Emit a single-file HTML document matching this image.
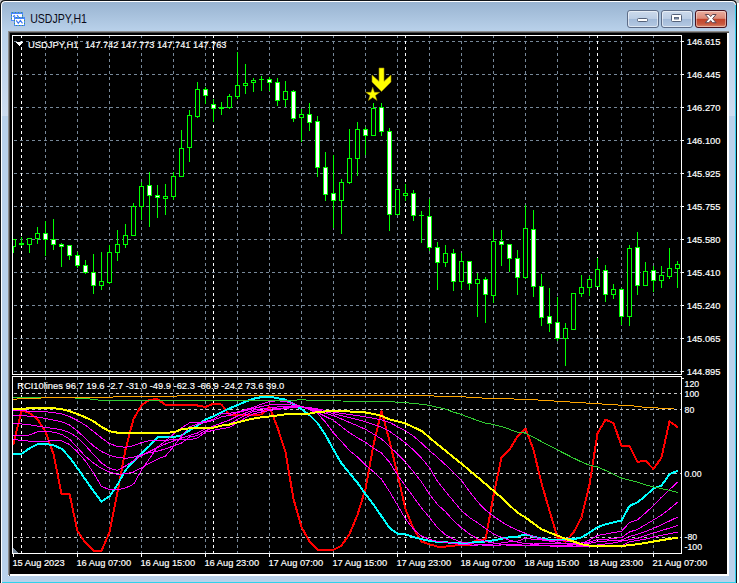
<!DOCTYPE html>
<html><head><meta charset="utf-8"><title>USDJPY,H1</title>
<style>
html,body{margin:0;padding:0;background:#fff;}
body{width:739px;height:583px;overflow:hidden;position:relative;font-family:"Liberation Sans",sans-serif;}
#chart{position:absolute;left:0;top:0;display:block;}
text{font-family:"Liberation Sans",sans-serif;}
</style></head><body>

<svg id="chart" width="739" height="583" viewBox="0 0 739 583">
<defs>
<linearGradient id="gt" gradientUnits="userSpaceOnUse" x1="0" y1="2" x2="0" y2="31"><stop offset="0" stop-color="#99b4d1"/><stop offset="1" stop-color="#b9d1ea"/></linearGradient>
<linearGradient id="gs" gradientUnits="userSpaceOnUse" x1="0" y1="31" x2="0" y2="116"><stop offset="0" stop-color="#b9d1ea"/><stop offset="1" stop-color="#cddcef"/></linearGradient>
</defs>
<rect x="0" y="0" width="5" height="4" fill="#bdbdbd"/><rect x="732" y="0" width="7" height="3" fill="#bdbdbd"/>
<path d="M0 590 V5 Q0 0 5 0 H732 Q737 0 737 5 V590 Z" fill="#101418"/>
<path d="M1 590 V5.5 Q1 1 5.500 1 H731.5 Q736 1 736 5.500 V590 Z" fill="#ffffff"/>
<path d="M2 590 V6 Q2 2 6 2 H731 Q735 2 735 6 V590 Z" fill="#b9d1ea"/>
<path d="M2 31 V6 Q2 2 6 2 H731 Q735 2 735 6 V31 Z" fill="url(#gt)"/>
<g shape-rendering="crispEdges">
<rect x="2" y="31" width="6" height="85" fill="url(#gs)"/>
<rect x="729" y="31" width="6" height="85" fill="url(#gs)"/>
<rect x="735" y="5" width="1" height="578" fill="#35d0ee"/>
<rect x="2" y="582" width="734" height="1" fill="#2fd2ec"/>
</g>
<text x="30.2" y="23.4" font-size="11.9" fill="#0a0a18" textLength="56.8" lengthAdjust="spacingAndGlyphs" style="font-family:'Liberation Sans',sans-serif">USDJPY,H1</text>

<g shape-rendering="crispEdges">
<rect x="11" y="12" width="12" height="9" fill="#4a86fb"/>
<rect x="12" y="14" width="10" height="6" fill="#fdfdff"/>
<rect x="14" y="17" width="11" height="9" fill="#4a86fb"/>
<rect x="15" y="19" width="9" height="6" fill="#ffffff"/>
<g fill="#3f9a6a">
<rect x="12" y="12" width="1" height="1"/><rect x="15" y="12" width="1" height="1"/><rect x="18" y="12" width="1" height="1"/><rect x="21" y="12" width="1" height="1"/>
<rect x="11" y="15" width="1" height="1"/><rect x="11" y="18" width="1" height="1"/><rect x="22" y="15" width="1" height="1"/>
<rect x="16" y="17" width="1" height="1"/><rect x="19" y="17" width="1" height="1"/><rect x="22" y="17" width="1" height="1"/>
<rect x="14" y="20" width="1" height="1"/><rect x="14" y="23" width="1" height="1"/><rect x="24" y="20" width="1" height="1"/><rect x="24" y="23" width="1" height="1"/>
<rect x="16" y="25" width="1" height="1"/><rect x="19" y="25" width="1" height="1"/><rect x="22" y="25" width="1" height="1"/>
</g>
</g>
<path d="M13 16.8 l1.2 -1.3 l0.9 1.2 M17 15.2 l1.6 2" fill="none" stroke="#3a78f2" stroke-width="1.1"/>
<path d="M16.2 20.4 l2.1 3 l2.1 -3 l2.1 3" fill="none" stroke="#3a78f2" stroke-width="1.1"/>

<g>
<defs>
<linearGradient id="gb" x1="0" y1="0" x2="0" y2="1"><stop offset="0" stop-color="#cddbec"/><stop offset="0.47" stop-color="#bccee5"/><stop offset="0.53" stop-color="#a3bbd9"/><stop offset="1" stop-color="#b6cae3"/></linearGradient>
<linearGradient id="gc" x1="0" y1="0" x2="0" y2="1"><stop offset="0" stop-color="#eab0a2"/><stop offset="0.46" stop-color="#dc8a77"/><stop offset="0.52" stop-color="#c2442b"/><stop offset="0.8" stop-color="#c8583f"/><stop offset="1" stop-color="#dc9478"/></linearGradient>
</defs>
<rect x="627.5" y="10.5" width="31" height="17" rx="2.500" fill="url(#gb)" stroke="#5d6d88"/>
<rect x="628.5" y="11.5" width="29" height="15" rx="2" fill="none" stroke="rgba(255,255,255,.55)"/>
<rect x="661.5" y="10.5" width="31" height="17" rx="2.500" fill="url(#gb)" stroke="#5d6d88"/>
<rect x="662.5" y="11.5" width="29" height="15" rx="2" fill="none" stroke="rgba(255,255,255,.55)"/>
<rect x="695.5" y="10.5" width="31" height="17" rx="2.500" fill="url(#gc)" stroke="#45121f"/>
<rect x="696.5" y="11.5" width="29" height="15" rx="2" fill="none" stroke="rgba(255,255,255,.4)"/>
</g>
<g>
<rect x="637.5" y="18.5" width="10" height="3" rx="1" fill="#fff" stroke="#55627a" stroke-width="1"/>
<rect x="671.5" y="14.5" width="10" height="7" rx="1" fill="#fff" stroke="#55627a" stroke-width="1"/>
<rect x="674.5" y="17.5" width="4" height="1.5" fill="#90a6c4" stroke="#55627a" stroke-width="0.9"/>
<path d="M705.3 14.5 l3.6 0 l1.8 2.1 l1.8 -2.1 l3.600 0 l-3.5 4.1 l3.500 4.1 l-3.600 0 l-1.8 -2.1 l-1.8 2.1 l-3.600 0 l3.500 -4.1 z" fill="#fff" stroke="#5e4650" stroke-width="1" stroke-linejoin="round"/>
</g>
<g shape-rendering="crispEdges">
<rect x="8" y="31" width="721" height="545" fill="#8c8c8c"/>
<rect x="9" y="32" width="720" height="544" fill="#4a4a4a"/>
<rect x="10" y="33" width="719" height="543" fill="#ffffff"/>
<rect x="8" y="575" width="1" height="1" fill="#ffffff"/>
<rect x="10" y="33" width="717" height="541" fill="#000"/>
<line x1="14" y1="41.5" x2="681" y2="41.5" stroke="#778899" stroke-width="1" stroke-dasharray="3 3"/>
<line x1="14" y1="74.5" x2="681" y2="74.5" stroke="#778899" stroke-width="1" stroke-dasharray="3 3"/>
<line x1="14" y1="107.5" x2="681" y2="107.5" stroke="#778899" stroke-width="1" stroke-dasharray="3 3"/>
<line x1="14" y1="140.5" x2="681" y2="140.5" stroke="#778899" stroke-width="1" stroke-dasharray="3 3"/>
<line x1="14" y1="173.5" x2="681" y2="173.5" stroke="#778899" stroke-width="1" stroke-dasharray="3 3"/>
<line x1="14" y1="206.5" x2="681" y2="206.5" stroke="#778899" stroke-width="1" stroke-dasharray="3 3"/>
<line x1="14" y1="239.5" x2="681" y2="239.5" stroke="#778899" stroke-width="1" stroke-dasharray="3 3"/>
<line x1="14" y1="272.5" x2="681" y2="272.5" stroke="#778899" stroke-width="1" stroke-dasharray="3 3"/>
<line x1="14" y1="305.5" x2="681" y2="305.5" stroke="#778899" stroke-width="1" stroke-dasharray="3 3"/>
<line x1="14" y1="338.5" x2="681" y2="338.5" stroke="#778899" stroke-width="1" stroke-dasharray="3 3"/>
<line x1="14" y1="371.5" x2="681" y2="371.5" stroke="#778899" stroke-width="1" stroke-dasharray="3 3"/>
<line x1="45.5" y1="35" x2="45.5" y2="374" stroke="#778899" stroke-width="1" stroke-dasharray="3 3"/>
<line x1="45.5" y1="377" x2="45.5" y2="553" stroke="#778899" stroke-width="1" stroke-dasharray="3 3"/>
<line x1="77.5" y1="35" x2="77.5" y2="374" stroke="#778899" stroke-width="1" stroke-dasharray="3 3"/>
<line x1="77.5" y1="377" x2="77.5" y2="553" stroke="#778899" stroke-width="1" stroke-dasharray="3 3"/>
<line x1="109.5" y1="35" x2="109.5" y2="374" stroke="#778899" stroke-width="1" stroke-dasharray="3 3"/>
<line x1="109.5" y1="377" x2="109.5" y2="553" stroke="#778899" stroke-width="1" stroke-dasharray="3 3"/>
<line x1="141.5" y1="35" x2="141.5" y2="374" stroke="#778899" stroke-width="1" stroke-dasharray="3 3"/>
<line x1="141.5" y1="377" x2="141.5" y2="553" stroke="#778899" stroke-width="1" stroke-dasharray="3 3"/>
<line x1="173.5" y1="35" x2="173.5" y2="374" stroke="#778899" stroke-width="1" stroke-dasharray="3 3"/>
<line x1="173.5" y1="377" x2="173.5" y2="553" stroke="#778899" stroke-width="1" stroke-dasharray="3 3"/>
<line x1="205.5" y1="35" x2="205.5" y2="374" stroke="#778899" stroke-width="1" stroke-dasharray="3 3"/>
<line x1="205.5" y1="377" x2="205.5" y2="553" stroke="#778899" stroke-width="1" stroke-dasharray="3 3"/>
<line x1="237.5" y1="35" x2="237.5" y2="374" stroke="#778899" stroke-width="1" stroke-dasharray="3 3"/>
<line x1="237.5" y1="377" x2="237.5" y2="553" stroke="#778899" stroke-width="1" stroke-dasharray="3 3"/>
<line x1="269.5" y1="35" x2="269.5" y2="374" stroke="#778899" stroke-width="1" stroke-dasharray="3 3"/>
<line x1="269.5" y1="377" x2="269.5" y2="553" stroke="#778899" stroke-width="1" stroke-dasharray="3 3"/>
<line x1="301.5" y1="35" x2="301.5" y2="374" stroke="#778899" stroke-width="1" stroke-dasharray="3 3"/>
<line x1="301.5" y1="377" x2="301.5" y2="553" stroke="#778899" stroke-width="1" stroke-dasharray="3 3"/>
<line x1="333.5" y1="35" x2="333.5" y2="374" stroke="#778899" stroke-width="1" stroke-dasharray="3 3"/>
<line x1="333.5" y1="377" x2="333.5" y2="553" stroke="#778899" stroke-width="1" stroke-dasharray="3 3"/>
<line x1="365.5" y1="35" x2="365.5" y2="374" stroke="#778899" stroke-width="1" stroke-dasharray="3 3"/>
<line x1="365.5" y1="377" x2="365.5" y2="553" stroke="#778899" stroke-width="1" stroke-dasharray="3 3"/>
<line x1="397.5" y1="35" x2="397.5" y2="374" stroke="#778899" stroke-width="1" stroke-dasharray="3 3"/>
<line x1="397.5" y1="377" x2="397.5" y2="553" stroke="#778899" stroke-width="1" stroke-dasharray="3 3"/>
<line x1="429.5" y1="35" x2="429.5" y2="374" stroke="#778899" stroke-width="1" stroke-dasharray="3 3"/>
<line x1="429.5" y1="377" x2="429.5" y2="553" stroke="#778899" stroke-width="1" stroke-dasharray="3 3"/>
<line x1="461.5" y1="35" x2="461.5" y2="374" stroke="#778899" stroke-width="1" stroke-dasharray="3 3"/>
<line x1="461.5" y1="377" x2="461.5" y2="553" stroke="#778899" stroke-width="1" stroke-dasharray="3 3"/>
<line x1="493.5" y1="35" x2="493.5" y2="374" stroke="#778899" stroke-width="1" stroke-dasharray="3 3"/>
<line x1="493.5" y1="377" x2="493.5" y2="553" stroke="#778899" stroke-width="1" stroke-dasharray="3 3"/>
<line x1="525.5" y1="35" x2="525.5" y2="374" stroke="#778899" stroke-width="1" stroke-dasharray="3 3"/>
<line x1="525.5" y1="377" x2="525.5" y2="553" stroke="#778899" stroke-width="1" stroke-dasharray="3 3"/>
<line x1="557.5" y1="35" x2="557.5" y2="374" stroke="#778899" stroke-width="1" stroke-dasharray="3 3"/>
<line x1="557.5" y1="377" x2="557.5" y2="553" stroke="#778899" stroke-width="1" stroke-dasharray="3 3"/>
<line x1="589.5" y1="35" x2="589.5" y2="374" stroke="#778899" stroke-width="1" stroke-dasharray="3 3"/>
<line x1="589.5" y1="377" x2="589.5" y2="553" stroke="#778899" stroke-width="1" stroke-dasharray="3 3"/>
<line x1="621.5" y1="35" x2="621.5" y2="374" stroke="#778899" stroke-width="1" stroke-dasharray="3 3"/>
<line x1="621.5" y1="377" x2="621.5" y2="553" stroke="#778899" stroke-width="1" stroke-dasharray="3 3"/>
<line x1="653.5" y1="35" x2="653.5" y2="374" stroke="#778899" stroke-width="1" stroke-dasharray="3 3"/>
<line x1="653.5" y1="377" x2="653.5" y2="553" stroke="#778899" stroke-width="1" stroke-dasharray="3 3"/>
<line x1="21.5" y1="35" x2="21.5" y2="374" stroke="#ffffff" stroke-width="1" stroke-dasharray="3 3"/>
<line x1="21.5" y1="377" x2="21.5" y2="553" stroke="#ffffff" stroke-width="1" stroke-dasharray="3 3"/>
<line x1="213.5" y1="35" x2="213.5" y2="374" stroke="#ffffff" stroke-width="1" stroke-dasharray="3 3"/>
<line x1="213.5" y1="377" x2="213.5" y2="553" stroke="#ffffff" stroke-width="1" stroke-dasharray="3 3"/>
<line x1="405.5" y1="35" x2="405.5" y2="374" stroke="#ffffff" stroke-width="1" stroke-dasharray="3 3"/>
<line x1="405.5" y1="377" x2="405.5" y2="553" stroke="#ffffff" stroke-width="1" stroke-dasharray="3 3"/>
<line x1="597.5" y1="35" x2="597.5" y2="374" stroke="#ffffff" stroke-width="1" stroke-dasharray="3 3"/>
<line x1="597.5" y1="377" x2="597.5" y2="553" stroke="#ffffff" stroke-width="1" stroke-dasharray="3 3"/>
<line x1="14" y1="393.5" x2="681" y2="393.5" stroke="#c8c8c8" stroke-width="1" stroke-dasharray="3 3"/>
<line x1="14" y1="409.5" x2="681" y2="409.5" stroke="#c8c8c8" stroke-width="1" stroke-dasharray="3 3"/>
<line x1="14" y1="473.5" x2="681" y2="473.5" stroke="#c8c8c8" stroke-width="1" stroke-dasharray="3 3"/>
<line x1="14" y1="537.5" x2="681" y2="537.5" stroke="#c8c8c8" stroke-width="1" stroke-dasharray="3 3"/>
<rect x="12.5" y="35.5" width="669" height="339" fill="none" stroke="#fff"/>
<rect x="12.5" y="376.5" width="669" height="177" fill="none" stroke="#fff"/>
<rect x="682" y="41" width="2" height="1" fill="#fff"/>
<rect x="682" y="74" width="2" height="1" fill="#fff"/>
<rect x="682" y="107" width="2" height="1" fill="#fff"/>
<rect x="682" y="140" width="2" height="1" fill="#fff"/>
<rect x="682" y="173" width="2" height="1" fill="#fff"/>
<rect x="682" y="206" width="2" height="1" fill="#fff"/>
<rect x="682" y="239" width="2" height="1" fill="#fff"/>
<rect x="682" y="272" width="2" height="1" fill="#fff"/>
<rect x="682" y="305" width="2" height="1" fill="#fff"/>
<rect x="682" y="338" width="2" height="1" fill="#fff"/>
<rect x="682" y="371" width="2" height="1" fill="#fff"/>
<rect x="682" y="378" width="2" height="1" fill="#fff"/>
<rect x="13" y="554" width="1" height="3" fill="#fff"/>
<rect x="77" y="554" width="1" height="3" fill="#fff"/>
<rect x="141" y="554" width="1" height="3" fill="#fff"/>
<rect x="205" y="554" width="1" height="3" fill="#fff"/>
<rect x="269" y="554" width="1" height="3" fill="#fff"/>
<rect x="333" y="554" width="1" height="3" fill="#fff"/>
<rect x="397" y="554" width="1" height="3" fill="#fff"/>
<rect x="461" y="554" width="1" height="3" fill="#fff"/>
<rect x="525" y="554" width="1" height="3" fill="#fff"/>
<rect x="589" y="554" width="1" height="3" fill="#fff"/>
<rect x="653" y="554" width="1" height="3" fill="#fff"/>
<polygon points="13,548 13,553 18,553" fill="#778899"/>
<polygon points="16,42 23,42 19.5,46" fill="#fff"/>
<rect x="13" y="239" width="1" height="14" fill="#00ff00"/>
<rect x="11" y="239" width="5" height="8" fill="#00ff00"/>
<rect x="12" y="240" width="3" height="6" fill="#000"/>
<rect x="21" y="237" width="1" height="9" fill="#00ff00"/>
<rect x="19" y="243" width="5" height="2" fill="#00ff00"/>
<rect x="29" y="238" width="1" height="15" fill="#00ff00"/>
<rect x="27" y="238" width="5" height="7" fill="#00ff00"/>
<rect x="28" y="239" width="3" height="5" fill="#000"/>
<rect x="37" y="227" width="1" height="17" fill="#00ff00"/>
<rect x="35" y="233" width="5" height="6" fill="#00ff00"/>
<rect x="36" y="234" width="3" height="4" fill="#000"/>
<rect x="45" y="221" width="1" height="35" fill="#00ff00"/>
<rect x="43" y="233" width="5" height="7" fill="#00ff00"/>
<rect x="44" y="234" width="3" height="5" fill="#fff"/>
<rect x="53" y="219" width="1" height="31" fill="#00ff00"/>
<rect x="51" y="239" width="5" height="6" fill="#00ff00"/>
<rect x="52" y="240" width="3" height="4" fill="#fff"/>
<rect x="61" y="243" width="1" height="24" fill="#00ff00"/>
<rect x="59" y="244" width="5" height="3" fill="#00ff00"/>
<rect x="60" y="245" width="3" height="1" fill="#fff"/>
<rect x="69" y="245" width="1" height="15" fill="#00ff00"/>
<rect x="67" y="245" width="5" height="11" fill="#00ff00"/>
<rect x="68" y="246" width="3" height="9" fill="#fff"/>
<rect x="77" y="252" width="1" height="16" fill="#00ff00"/>
<rect x="75" y="255" width="5" height="11" fill="#00ff00"/>
<rect x="76" y="256" width="3" height="9" fill="#fff"/>
<rect x="85" y="260" width="1" height="14" fill="#00ff00"/>
<rect x="83" y="265" width="5" height="8" fill="#00ff00"/>
<rect x="84" y="266" width="3" height="6" fill="#fff"/>
<rect x="93" y="254" width="1" height="40" fill="#00ff00"/>
<rect x="91" y="272" width="5" height="14" fill="#00ff00"/>
<rect x="92" y="273" width="3" height="12" fill="#fff"/>
<rect x="101" y="252" width="1" height="38" fill="#00ff00"/>
<rect x="99" y="281" width="5" height="5" fill="#00ff00"/>
<rect x="100" y="282" width="3" height="3" fill="#000"/>
<rect x="109" y="245" width="1" height="39" fill="#00ff00"/>
<rect x="107" y="252" width="5" height="31" fill="#00ff00"/>
<rect x="108" y="253" width="3" height="29" fill="#000"/>
<rect x="117" y="230" width="1" height="31" fill="#00ff00"/>
<rect x="115" y="244" width="5" height="9" fill="#00ff00"/>
<rect x="116" y="245" width="3" height="7" fill="#000"/>
<rect x="125" y="224" width="1" height="24" fill="#00ff00"/>
<rect x="123" y="235" width="5" height="10" fill="#00ff00"/>
<rect x="124" y="236" width="3" height="8" fill="#000"/>
<rect x="133" y="203" width="1" height="33" fill="#00ff00"/>
<rect x="131" y="206" width="5" height="30" fill="#00ff00"/>
<rect x="132" y="207" width="3" height="28" fill="#000"/>
<rect x="141" y="182" width="1" height="38" fill="#00ff00"/>
<rect x="139" y="186" width="5" height="21" fill="#00ff00"/>
<rect x="140" y="187" width="3" height="19" fill="#000"/>
<rect x="149" y="172" width="1" height="55" fill="#00ff00"/>
<rect x="147" y="185" width="5" height="11" fill="#00ff00"/>
<rect x="148" y="186" width="3" height="9" fill="#fff"/>
<rect x="157" y="185" width="1" height="33" fill="#00ff00"/>
<rect x="155" y="195" width="5" height="3" fill="#00ff00"/>
<rect x="156" y="196" width="3" height="1" fill="#fff"/>
<rect x="165" y="184" width="1" height="31" fill="#00ff00"/>
<rect x="163" y="196" width="5" height="3" fill="#00ff00"/>
<rect x="164" y="197" width="3" height="1" fill="#000"/>
<rect x="173" y="172" width="1" height="28" fill="#00ff00"/>
<rect x="171" y="176" width="5" height="21" fill="#00ff00"/>
<rect x="172" y="177" width="3" height="19" fill="#000"/>
<rect x="181" y="130" width="1" height="47" fill="#00ff00"/>
<rect x="179" y="148" width="5" height="29" fill="#00ff00"/>
<rect x="180" y="149" width="3" height="27" fill="#000"/>
<rect x="189" y="110" width="1" height="52" fill="#00ff00"/>
<rect x="187" y="115" width="5" height="33" fill="#00ff00"/>
<rect x="188" y="116" width="3" height="31" fill="#000"/>
<rect x="197" y="82" width="1" height="36" fill="#00ff00"/>
<rect x="195" y="89" width="5" height="28" fill="#00ff00"/>
<rect x="196" y="90" width="3" height="26" fill="#000"/>
<rect x="205" y="87" width="1" height="17" fill="#00ff00"/>
<rect x="203" y="89" width="5" height="7" fill="#00ff00"/>
<rect x="204" y="90" width="3" height="5" fill="#fff"/>
<rect x="213" y="99" width="1" height="23" fill="#00ff00"/>
<rect x="211" y="104" width="5" height="5" fill="#00ff00"/>
<rect x="212" y="105" width="3" height="3" fill="#fff"/>
<rect x="221" y="102" width="1" height="13" fill="#00ff00"/>
<rect x="219" y="107" width="5" height="2" fill="#00ff00"/>
<rect x="229" y="94" width="1" height="15" fill="#00ff00"/>
<rect x="227" y="96" width="5" height="12" fill="#00ff00"/>
<rect x="228" y="97" width="3" height="10" fill="#000"/>
<rect x="237" y="52" width="1" height="47" fill="#00ff00"/>
<rect x="235" y="85" width="5" height="12" fill="#00ff00"/>
<rect x="236" y="86" width="3" height="10" fill="#000"/>
<rect x="245" y="64" width="1" height="30" fill="#00ff00"/>
<rect x="243" y="83" width="5" height="3" fill="#00ff00"/>
<rect x="244" y="84" width="3" height="1" fill="#000"/>
<rect x="253" y="78" width="1" height="14" fill="#00ff00"/>
<rect x="251" y="80" width="5" height="3" fill="#00ff00"/>
<rect x="252" y="81" width="3" height="1" fill="#000"/>
<rect x="261" y="76" width="1" height="15" fill="#00ff00"/>
<rect x="259" y="79" width="5" height="1" fill="#00ff00"/>
<rect x="269" y="77" width="1" height="14" fill="#00ff00"/>
<rect x="267" y="79" width="5" height="4" fill="#00ff00"/>
<rect x="268" y="80" width="3" height="2" fill="#fff"/>
<rect x="277" y="78" width="1" height="28" fill="#00ff00"/>
<rect x="275" y="82" width="5" height="19" fill="#00ff00"/>
<rect x="276" y="83" width="3" height="17" fill="#fff"/>
<rect x="285" y="81" width="1" height="26" fill="#00ff00"/>
<rect x="283" y="91" width="5" height="9" fill="#00ff00"/>
<rect x="284" y="92" width="3" height="7" fill="#000"/>
<rect x="293" y="90" width="1" height="32" fill="#00ff00"/>
<rect x="291" y="91" width="5" height="28" fill="#00ff00"/>
<rect x="292" y="92" width="3" height="26" fill="#fff"/>
<rect x="301" y="109" width="1" height="33" fill="#00ff00"/>
<rect x="299" y="114" width="5" height="4" fill="#00ff00"/>
<rect x="300" y="115" width="3" height="2" fill="#000"/>
<rect x="309" y="103" width="1" height="28" fill="#00ff00"/>
<rect x="307" y="114" width="5" height="9" fill="#00ff00"/>
<rect x="308" y="115" width="3" height="7" fill="#fff"/>
<rect x="317" y="116" width="1" height="61" fill="#00ff00"/>
<rect x="315" y="121" width="5" height="47" fill="#00ff00"/>
<rect x="316" y="122" width="3" height="45" fill="#fff"/>
<rect x="325" y="152" width="1" height="49" fill="#00ff00"/>
<rect x="323" y="167" width="5" height="28" fill="#00ff00"/>
<rect x="324" y="168" width="3" height="26" fill="#fff"/>
<rect x="333" y="155" width="1" height="73" fill="#00ff00"/>
<rect x="331" y="193" width="5" height="8" fill="#00ff00"/>
<rect x="332" y="194" width="3" height="6" fill="#fff"/>
<rect x="341" y="179" width="1" height="55" fill="#00ff00"/>
<rect x="339" y="182" width="5" height="19" fill="#00ff00"/>
<rect x="340" y="183" width="3" height="17" fill="#000"/>
<rect x="349" y="129" width="1" height="55" fill="#00ff00"/>
<rect x="347" y="158" width="5" height="25" fill="#00ff00"/>
<rect x="348" y="159" width="3" height="23" fill="#000"/>
<rect x="357" y="122" width="1" height="54" fill="#00ff00"/>
<rect x="355" y="129" width="5" height="30" fill="#00ff00"/>
<rect x="356" y="130" width="3" height="28" fill="#000"/>
<rect x="365" y="127" width="1" height="28" fill="#00ff00"/>
<rect x="363" y="129" width="5" height="7" fill="#00ff00"/>
<rect x="364" y="130" width="3" height="5" fill="#fff"/>
<rect x="373" y="103" width="1" height="33" fill="#00ff00"/>
<rect x="371" y="108" width="5" height="28" fill="#00ff00"/>
<rect x="372" y="109" width="3" height="26" fill="#000"/>
<rect x="381" y="103" width="1" height="33" fill="#00ff00"/>
<rect x="379" y="107" width="5" height="25" fill="#00ff00"/>
<rect x="380" y="108" width="3" height="23" fill="#fff"/>
<rect x="389" y="128" width="1" height="103" fill="#00ff00"/>
<rect x="387" y="131" width="5" height="84" fill="#00ff00"/>
<rect x="388" y="132" width="3" height="82" fill="#fff"/>
<rect x="397" y="189" width="1" height="26" fill="#00ff00"/>
<rect x="395" y="189" width="5" height="26" fill="#00ff00"/>
<rect x="396" y="190" width="3" height="24" fill="#000"/>
<rect x="405" y="184" width="1" height="17" fill="#00ff00"/>
<rect x="403" y="193" width="5" height="3" fill="#00ff00"/>
<rect x="404" y="194" width="3" height="1" fill="#000"/>
<rect x="413" y="190" width="1" height="31" fill="#00ff00"/>
<rect x="411" y="193" width="5" height="23" fill="#00ff00"/>
<rect x="412" y="194" width="3" height="21" fill="#fff"/>
<rect x="421" y="211" width="1" height="32" fill="#00ff00"/>
<rect x="419" y="215" width="5" height="1" fill="#00ff00"/>
<rect x="429" y="199" width="1" height="52" fill="#00ff00"/>
<rect x="427" y="216" width="5" height="32" fill="#00ff00"/>
<rect x="428" y="217" width="3" height="30" fill="#fff"/>
<rect x="437" y="242" width="1" height="48" fill="#00ff00"/>
<rect x="435" y="247" width="5" height="16" fill="#00ff00"/>
<rect x="436" y="248" width="3" height="14" fill="#fff"/>
<rect x="445" y="245" width="1" height="22" fill="#00ff00"/>
<rect x="443" y="253" width="5" height="10" fill="#00ff00"/>
<rect x="444" y="254" width="3" height="8" fill="#000"/>
<rect x="453" y="249" width="1" height="42" fill="#00ff00"/>
<rect x="451" y="253" width="5" height="29" fill="#00ff00"/>
<rect x="452" y="254" width="3" height="27" fill="#fff"/>
<rect x="461" y="253" width="1" height="36" fill="#00ff00"/>
<rect x="459" y="261" width="5" height="21" fill="#00ff00"/>
<rect x="460" y="262" width="3" height="19" fill="#000"/>
<rect x="469" y="261" width="1" height="29" fill="#00ff00"/>
<rect x="467" y="261" width="5" height="23" fill="#00ff00"/>
<rect x="468" y="262" width="3" height="21" fill="#fff"/>
<rect x="477" y="273" width="1" height="44" fill="#00ff00"/>
<rect x="475" y="279" width="5" height="5" fill="#00ff00"/>
<rect x="476" y="280" width="3" height="3" fill="#000"/>
<rect x="485" y="277" width="1" height="46" fill="#00ff00"/>
<rect x="483" y="279" width="5" height="16" fill="#00ff00"/>
<rect x="484" y="280" width="3" height="14" fill="#fff"/>
<rect x="493" y="230" width="1" height="73" fill="#00ff00"/>
<rect x="491" y="241" width="5" height="55" fill="#00ff00"/>
<rect x="492" y="242" width="3" height="53" fill="#000"/>
<rect x="501" y="230" width="1" height="36" fill="#00ff00"/>
<rect x="499" y="241" width="5" height="4" fill="#00ff00"/>
<rect x="500" y="242" width="3" height="2" fill="#fff"/>
<rect x="509" y="244" width="1" height="28" fill="#00ff00"/>
<rect x="507" y="244" width="5" height="15" fill="#00ff00"/>
<rect x="508" y="245" width="3" height="13" fill="#fff"/>
<rect x="517" y="250" width="1" height="45" fill="#00ff00"/>
<rect x="515" y="258" width="5" height="20" fill="#00ff00"/>
<rect x="516" y="259" width="3" height="18" fill="#fff"/>
<rect x="525" y="205" width="1" height="74" fill="#00ff00"/>
<rect x="523" y="228" width="5" height="50" fill="#00ff00"/>
<rect x="524" y="229" width="3" height="48" fill="#000"/>
<rect x="533" y="210" width="1" height="87" fill="#00ff00"/>
<rect x="531" y="229" width="5" height="58" fill="#00ff00"/>
<rect x="532" y="230" width="3" height="56" fill="#fff"/>
<rect x="541" y="274" width="1" height="52" fill="#00ff00"/>
<rect x="539" y="286" width="5" height="32" fill="#00ff00"/>
<rect x="540" y="287" width="3" height="30" fill="#fff"/>
<rect x="549" y="288" width="1" height="44" fill="#00ff00"/>
<rect x="547" y="316" width="5" height="8" fill="#00ff00"/>
<rect x="548" y="317" width="3" height="6" fill="#fff"/>
<rect x="557" y="297" width="1" height="44" fill="#00ff00"/>
<rect x="555" y="322" width="5" height="17" fill="#00ff00"/>
<rect x="556" y="323" width="3" height="15" fill="#fff"/>
<rect x="565" y="323" width="1" height="43" fill="#00ff00"/>
<rect x="563" y="328" width="5" height="11" fill="#00ff00"/>
<rect x="564" y="329" width="3" height="9" fill="#000"/>
<rect x="573" y="293" width="1" height="37" fill="#00ff00"/>
<rect x="571" y="293" width="5" height="37" fill="#00ff00"/>
<rect x="572" y="294" width="3" height="35" fill="#000"/>
<rect x="581" y="275" width="1" height="22" fill="#00ff00"/>
<rect x="579" y="287" width="5" height="7" fill="#00ff00"/>
<rect x="580" y="288" width="3" height="5" fill="#000"/>
<rect x="589" y="276" width="1" height="20" fill="#00ff00"/>
<rect x="587" y="279" width="5" height="9" fill="#00ff00"/>
<rect x="588" y="280" width="3" height="7" fill="#000"/>
<rect x="597" y="258" width="1" height="29" fill="#00ff00"/>
<rect x="595" y="269" width="5" height="18" fill="#00ff00"/>
<rect x="596" y="270" width="3" height="16" fill="#000"/>
<rect x="605" y="265" width="1" height="37" fill="#00ff00"/>
<rect x="603" y="270" width="5" height="25" fill="#00ff00"/>
<rect x="604" y="271" width="3" height="23" fill="#fff"/>
<rect x="613" y="284" width="1" height="15" fill="#00ff00"/>
<rect x="611" y="289" width="5" height="6" fill="#00ff00"/>
<rect x="612" y="290" width="3" height="4" fill="#000"/>
<rect x="621" y="288" width="1" height="37" fill="#00ff00"/>
<rect x="619" y="289" width="5" height="28" fill="#00ff00"/>
<rect x="620" y="290" width="3" height="26" fill="#fff"/>
<rect x="629" y="245" width="1" height="81" fill="#00ff00"/>
<rect x="627" y="248" width="5" height="69" fill="#00ff00"/>
<rect x="628" y="249" width="3" height="67" fill="#000"/>
<rect x="637" y="232" width="1" height="63" fill="#00ff00"/>
<rect x="635" y="247" width="5" height="39" fill="#00ff00"/>
<rect x="636" y="248" width="3" height="37" fill="#fff"/>
<rect x="645" y="262" width="1" height="24" fill="#00ff00"/>
<rect x="643" y="271" width="5" height="15" fill="#00ff00"/>
<rect x="644" y="272" width="3" height="13" fill="#000"/>
<rect x="653" y="266" width="1" height="26" fill="#00ff00"/>
<rect x="651" y="270" width="5" height="11" fill="#00ff00"/>
<rect x="652" y="271" width="3" height="9" fill="#fff"/>
<rect x="661" y="266" width="1" height="22" fill="#00ff00"/>
<rect x="659" y="275" width="5" height="6" fill="#00ff00"/>
<rect x="660" y="276" width="3" height="4" fill="#000"/>
<rect x="669" y="248" width="1" height="31" fill="#00ff00"/>
<rect x="667" y="268" width="5" height="9" fill="#00ff00"/>
<rect x="668" y="269" width="3" height="7" fill="#000"/>
<rect x="677" y="261" width="1" height="27" fill="#00ff00"/>
<rect x="675" y="264" width="5" height="5" fill="#00ff00"/>
<rect x="676" y="265" width="3" height="3" fill="#000"/>
<rect x="10" y="36" width="2" height="338" fill="#000"/>
<rect x="12" y="35" width="1" height="340" fill="#fff"/>
</g>
<g shape-rendering="crispEdges" clip-path="url(#ci)"><defs><clipPath id="ci"><rect x="13" y="377" width="668" height="176"/></clipPath></defs>
<polyline points="13.5,443.9 21.5,410.3 29.5,413.0 37.5,419.2 45.5,431.6 53.5,454.2 61.5,493.8 69.5,493.8 77.5,531.3 85.5,542.7 93.5,550.9 101.5,550.9 109.5,532.1 117.5,492.0 125.5,449.5 133.5,419.0 141.5,405.3 149.5,399.8 157.5,399.1 165.5,404.9 173.5,404.9 181.5,404.9 189.5,404.9 197.5,405.5 205.5,407.0 213.5,403.6 221.5,404.6 229.5,414.7 237.5,414.9 245.5,414.9 253.5,414.6 261.5,414.5 269.5,406.8 277.5,427.5 285.5,452.2 293.5,499.0 301.5,527.1 309.5,541.5 317.5,549.8 325.5,549.8 333.5,549.8 341.5,545.6 349.5,534.0 357.5,514.8 365.5,488.7 373.5,444.7 381.5,410.8 389.5,441.0 397.5,474.0 405.5,509.3 413.5,528.5 421.5,541.5 429.5,544.3 437.5,546.6 445.5,546.6 453.5,545.6 461.5,545.0 469.5,544.7 477.5,539.8 485.5,539.4 493.5,495.6 501.5,457.4 509.5,449.9 517.5,436.2 525.5,428.6 533.5,449.9 541.5,483.2 549.5,510.7 557.5,537.4 565.5,541.5 573.5,532.6 581.5,517.5 589.5,484.6 597.5,433.4 605.5,419.7 613.5,423.1 621.5,445.8 629.5,445.8 637.5,461.9 645.5,460.8 653.5,469.1 661.5,457.4 669.5,421.3 677.5,427.2" fill="none" stroke="#ff0000" stroke-width="2" stroke-linejoin="round" stroke-linecap="round"/>
<polyline points="13.5,453.9 21.5,453.9 29.5,448.3 37.5,444.3 45.5,443.8 53.5,445.3 61.5,448.7 69.5,457.2 77.5,468.3 85.5,479.7 93.5,491.0 101.5,501.5 109.5,496.3 117.5,484.7 125.5,470.2 133.5,461.1 141.5,453.6 149.5,446.0 157.5,437.1 165.5,437.0 173.5,437.0 181.5,435.4 189.5,430.4 197.5,425.6 205.5,419.4 213.5,416.3 221.5,412.3 229.5,408.4 237.5,405.1 245.5,401.7 253.5,398.7 261.5,397.1 269.5,396.5 277.5,398.2 285.5,399.7 293.5,404.2 301.5,409.2 309.5,415.0 317.5,422.9 325.5,435.0 333.5,449.7 341.5,463.4 349.5,473.1 357.5,482.8 365.5,494.2 373.5,504.5 381.5,516.2 389.5,527.8 397.5,533.7 405.5,534.3 413.5,537.0 421.5,539.2 429.5,540.8 437.5,541.9 445.5,542.4 453.5,542.7 461.5,542.7 469.5,542.6 477.5,542.3 485.5,541.4 493.5,540.3 501.5,538.9 509.5,537.1 517.5,536.7 525.5,534.2 533.5,536.6 541.5,538.8 549.5,539.7 557.5,539.5 565.5,539.5 573.5,539.2 581.5,537.4 589.5,532.6 597.5,527.2 605.5,524.3 613.5,522.3 621.5,520.5 629.5,505.9 637.5,502.3 645.5,495.9 653.5,488.3 661.5,485.6 669.5,474.3 677.5,470.8" fill="none" stroke="#00ffff" stroke-width="2" stroke-linejoin="round" stroke-linecap="round"/>
<polyline points="13.5,439.8 21.5,440.2 29.5,441.2 37.5,441.4 45.5,441.2 53.5,440.7 61.5,440.8 69.5,444.5 77.5,452.0 85.5,461.0 93.5,473.0 101.5,486.5 109.5,489.5 117.5,489.8 125.5,487.8 133.5,484.5 141.5,470.0 149.5,458.6 157.5,447.0 165.5,441.0 173.5,434.0 181.5,428.0 189.5,422.9 197.5,422.6 205.5,421.6 213.5,419.2 221.5,413.9 229.5,413.3 237.5,412.0 245.5,409.6 253.5,407.2 261.5,404.2 269.5,401.5 277.5,400.8 285.5,401.5 293.5,403.5 301.5,406.7 309.5,409.7 317.5,413.3 325.5,422.2 333.5,433.0 341.5,441.5 349.5,450.6 357.5,457.0 365.5,465.0 373.5,471.8 381.5,479.1 389.5,491.5 397.5,505.2 405.5,518.9 413.5,529.2 421.5,536.0 429.5,539.2 437.5,541.5 445.5,542.3 453.5,543.3 461.5,544.5 469.5,545.0 477.5,545.0 485.5,544.5 493.5,544.0 501.5,543.0 509.5,541.8 517.5,541.3 525.5,538.0 533.5,539.4 541.5,540.0 549.5,540.2 557.5,540.5 565.5,541.0 573.5,542.0 581.5,543.3 589.5,540.0 597.5,535.4 605.5,534.2 613.5,532.5 621.5,531.3 629.5,522.6 637.5,519.9 645.5,513.0 653.5,505.5 661.5,497.2 669.5,489.7 677.5,482.1" fill="none" stroke="#ff00ff" stroke-width="1" stroke-linejoin="round" stroke-linecap="round"/>
<polyline points="13.5,435.4 21.5,435.4 29.5,435.0 37.5,431.8 45.5,431.3 53.5,432.2 61.5,434.3 69.5,439.1 77.5,447.5 85.5,456.5 93.5,463.0 101.5,468.5 109.5,472.0 117.5,474.4 125.5,473.7 133.5,472.0 141.5,467.7 149.5,463.2 157.5,459.1 165.5,456.0 173.5,446.7 181.5,436.0 189.5,426.9 197.5,424.0 205.5,422.5 213.5,420.2 221.5,416.8 229.5,415.4 237.5,412.5 245.5,410.5 253.5,408.5 261.5,406.5 269.5,405.0 277.5,404.2 285.5,404.4 293.5,405.3 301.5,406.7 309.5,409.5 317.5,412.5 325.5,416.5 333.5,420.4 341.5,426.6 349.5,432.7 357.5,437.8 365.5,442.3 373.5,448.2 381.5,453.0 389.5,462.2 397.5,475.0 405.5,486.0 413.5,497.0 421.5,507.9 429.5,517.5 437.5,527.8 445.5,534.7 453.5,539.2 461.5,542.2 469.5,543.2 477.5,544.5 485.5,545.5 493.5,545.5 501.5,545.0 509.5,544.6 517.5,544.6 525.5,543.5 533.5,543.0 541.5,543.0 549.5,543.2 557.5,543.3 565.5,543.3 573.5,543.3 581.5,543.0 589.5,542.2 597.5,539.5 605.5,539.5 613.5,538.3 621.5,537.7 629.5,531.9 637.5,529.5 645.5,524.7 653.5,519.9 661.5,515.1 669.5,508.9 677.5,502.3" fill="none" stroke="#ff00ff" stroke-width="1" stroke-linejoin="round" stroke-linecap="round"/>
<polyline points="13.5,423.6 21.5,424.0 29.5,424.7 37.5,426.1 45.5,427.4 53.5,428.5 61.5,429.8 69.5,432.5 77.5,437.5 85.5,445.5 93.5,454.5 101.5,463.0 109.5,468.5 117.5,470.3 125.5,466.0 133.5,460.7 141.5,455.5 149.5,451.5 157.5,447.5 165.5,444.0 173.5,441.0 181.5,438.0 189.5,435.5 197.5,433.0 205.5,428.8 213.5,426.0 221.5,423.0 229.5,420.0 237.5,416.0 245.5,413.0 253.5,410.0 261.5,408.8 269.5,407.8 277.5,407.0 285.5,406.7 293.5,406.5 301.5,406.7 309.5,408.8 317.5,411.0 325.5,413.3 333.5,415.6 341.5,419.0 349.5,422.4 357.5,425.7 365.5,429.3 373.5,434.1 381.5,438.9 389.5,446.4 397.5,454.0 405.5,462.2 413.5,471.8 421.5,481.9 429.5,494.2 437.5,504.5 445.5,511.7 453.5,520.6 461.5,527.8 469.5,534.0 477.5,538.8 485.5,541.5 493.5,543.0 501.5,544.5 509.5,545.5 517.5,545.5 525.5,545.0 533.5,545.0 541.5,545.3 549.5,545.6 557.5,545.6 565.5,545.3 573.5,545.0 581.5,544.4 589.5,543.3 597.5,541.7 605.5,541.1 613.5,540.6 621.5,540.2 629.5,536.3 637.5,534.3 645.5,531.5 653.5,528.4 661.5,524.7 669.5,521.0 677.5,517.1" fill="none" stroke="#ff00ff" stroke-width="1" stroke-linejoin="round" stroke-linecap="round"/>
<polyline points="13.5,415.4 21.5,415.5 29.5,416.2 37.5,417.1 45.5,418.5 53.5,420.2 61.5,421.7 69.5,425.0 77.5,431.0 85.5,438.5 93.5,446.0 101.5,451.5 109.5,455.3 117.5,457.5 125.5,458.3 133.5,457.2 141.5,454.8 149.5,452.7 157.5,451.2 165.5,448.8 173.5,445.9 181.5,443.0 189.5,437.0 197.5,435.5 205.5,430.7 213.5,427.9 221.5,425.5 229.5,424.0 237.5,419.5 245.5,415.0 253.5,411.5 261.5,410.3 269.5,409.3 277.5,408.5 285.5,407.8 293.5,407.2 301.5,406.7 309.5,408.3 317.5,410.0 325.5,411.8 333.5,413.5 341.5,415.6 349.5,417.6 357.5,419.7 365.5,421.7 373.5,424.5 381.5,427.2 389.5,431.4 397.5,436.8 405.5,443.0 413.5,449.9 421.5,458.1 429.5,467.7 437.5,481.3 445.5,491.5 453.5,501.1 461.5,510.7 469.5,517.5 477.5,522.7 485.5,528.5 493.5,533.8 501.5,537.4 509.5,540.3 517.5,542.2 525.5,543.5 533.5,544.5 541.5,545.3 549.5,546.0 557.5,546.5 565.5,546.5 573.5,546.5 581.5,546.3 589.5,546.0 597.5,545.0 605.5,544.0 613.5,543.0 621.5,541.1 629.5,539.8 637.5,538.4 645.5,535.6 653.5,532.9 661.5,530.6 669.5,528.1 677.5,525.4" fill="none" stroke="#ff00ff" stroke-width="1" stroke-linejoin="round" stroke-linecap="round"/>
<polyline points="13.5,410.3 21.5,410.7 29.5,411.2 37.5,411.5 45.5,411.7 53.5,412.6 61.5,413.8 69.5,416.5 77.5,420.5 85.5,425.3 93.5,431.5 101.5,437.9 109.5,443.6 117.5,446.4 125.5,447.3 133.5,445.7 141.5,442.6 149.5,440.6 157.5,440.2 165.5,440.1 173.5,439.9 181.5,439.9 189.5,439.9 197.5,437.9 205.5,432.2 213.5,430.3 221.5,428.8 229.5,427.4 237.5,422.6 245.5,417.8 253.5,413.9 261.5,412.0 269.5,410.5 277.5,409.5 285.5,408.5 293.5,407.5 301.5,406.7 309.5,407.6 317.5,409.0 325.5,410.4 333.5,412.0 341.5,413.5 349.5,414.5 357.5,415.6 365.5,417.0 373.5,418.3 381.5,419.9 389.5,422.4 397.5,426.6 405.5,430.9 413.5,436.2 421.5,443.0 429.5,450.6 437.5,457.4 445.5,464.8 453.5,472.5 461.5,480.5 469.5,491.5 477.5,501.7 485.5,510.0 493.5,516.2 501.5,521.8 509.5,526.5 517.5,530.2 525.5,533.4 533.5,536.5 541.5,539.0 549.5,541.0 557.5,542.5 565.5,543.8 573.5,544.8 581.5,545.5 589.5,546.0 597.5,546.3 605.5,546.5 613.5,546.5 621.5,546.0 629.5,541.8 637.5,540.4 645.5,539.1 653.5,537.0 661.5,535.4 669.5,533.6 677.5,532.2" fill="none" stroke="#ff00ff" stroke-width="1" stroke-linejoin="round" stroke-linecap="round"/>
<polyline points="13.5,409.3 21.5,409.0 29.5,408.2 37.5,408.0 45.5,408.0 53.5,408.2 61.5,409.2 69.5,411.2 77.5,414.0 85.5,417.4 93.5,421.3 101.5,426.8 109.5,431.3 117.5,432.7 125.5,432.8 133.5,432.8 141.5,432.8 149.5,432.8 157.5,432.8 165.5,432.8 173.5,432.3 181.5,429.4 189.5,428.3 197.5,428.2 205.5,427.9 213.5,427.7 221.5,425.6 229.5,424.5 237.5,422.3 245.5,420.3 253.5,418.6 261.5,417.3 269.5,416.4 277.5,415.5 285.5,414.3 293.5,414.1 301.5,413.8 309.5,413.6 317.5,412.1 325.5,411.5 333.5,411.2 341.5,411.2 349.5,411.5 357.5,412.1 365.5,412.5 373.5,413.9 381.5,415.9 389.5,419.4 397.5,421.3 405.5,423.5 413.5,427.2 421.5,430.9 429.5,437.5 437.5,444.4 445.5,450.6 453.5,457.4 461.5,463.6 469.5,470.4 477.5,477.1 485.5,483.9 493.5,490.8 501.5,497.6 509.5,505.2 517.5,512.7 525.5,517.5 533.5,523.5 541.5,529.2 549.5,532.6 557.5,535.6 565.5,538.8 573.5,541.5 581.5,544.3 589.5,545.6 597.5,545.9 605.5,545.9 613.5,545.9 621.5,545.9 629.5,545.2 637.5,544.2 645.5,542.9 653.5,541.5 661.5,540.2 669.5,538.8 677.5,537.7" fill="none" stroke="#ffff00" stroke-width="2" stroke-linejoin="round" stroke-linecap="round"/>
<polyline points="13.5,397.5 21.5,397.5 29.5,397.5 37.5,397.5 45.5,397.5 53.5,397.5 61.5,397.5 69.5,397.5 77.5,398.2 85.5,398.5 93.5,399.4 101.5,400.4 109.5,400.5 117.5,400.5 125.5,400.5 133.5,400.5 141.5,400.5 149.5,400.5 157.5,400.5 165.5,400.5 173.5,400.5 181.5,400.5 189.5,400.5 197.5,400.5 205.5,400.5 213.5,400.5 221.5,400.5 229.5,400.5 237.5,400.5 245.5,400.5 253.5,400.5 261.5,400.5 269.5,400.5 277.5,400.5 285.5,400.5 293.5,400.5 301.5,399.5 309.5,400.5 317.5,400.6 325.5,400.7 333.5,400.9 341.5,401.0 349.5,401.1 357.5,401.2 365.5,401.3 373.5,401.3 381.5,401.4 389.5,401.8 397.5,402.1 405.5,402.7 413.5,403.4 421.5,404.3 429.5,405.3 437.5,407.3 445.5,409.1 453.5,412.1 461.5,414.5 469.5,417.6 477.5,420.4 485.5,423.1 493.5,424.5 501.5,426.6 509.5,429.3 517.5,432.3 525.5,433.1 533.5,437.3 541.5,441.6 549.5,445.8 557.5,449.9 565.5,454.0 573.5,458.1 581.5,461.9 589.5,465.2 597.5,467.0 605.5,470.4 613.5,474.2 621.5,478.0 629.5,480.1 637.5,482.1 645.5,484.9 653.5,486.9 661.5,488.6 669.5,490.4 677.5,492.4" fill="none" stroke="#32cd32" stroke-width="1" stroke-linejoin="round" stroke-linecap="round"/>
<polyline points="13.5,399.5 21.5,398.5 29.5,398.5 37.5,398.5 45.5,397.5 53.5,397.5 61.5,397.5 69.5,397.5 77.5,397.5 85.5,397.5 93.5,397.5 101.5,397.5 109.5,397.5 117.5,396.5 125.5,396.5 133.5,396.5 141.5,396.5 149.5,396.5 157.5,396.5 165.5,396.5 173.5,396.5 181.5,395.5 189.5,395.5 197.5,395.5 205.5,395.5 213.5,395.5 221.5,395.5 229.5,395.5 237.5,395.5 245.5,395.5 253.5,395.5 261.5,395.5 269.5,395.5 277.5,395.5 285.5,395.5 293.5,395.5 301.5,395.5 309.5,395.5 317.5,395.5 325.5,395.5 333.5,395.5 341.5,395.5 349.5,395.5 357.5,395.5 365.5,395.5 373.5,395.5 381.5,395.5 389.5,395.5 397.5,395.5 405.5,395.5 413.5,395.5 421.5,395.5 429.5,395.5 437.5,396.5 445.5,396.5 453.5,396.5 461.5,396.5 469.5,397.5 477.5,397.5 485.5,398.5 493.5,398.5 501.5,398.5 509.5,398.5 517.5,399.5 525.5,399.5 533.5,399.5 541.5,400.5 549.5,400.5 557.5,401.5 565.5,401.5 573.5,402.5 581.5,402.5 589.5,403.5 597.5,403.5 605.5,404.5 613.5,404.5 621.5,405.5 629.5,405.5 637.5,406.5 645.5,407.5 653.5,407.5 661.5,408.5 669.5,408.5 674.0,408.5" fill="none" stroke="#ffa500" stroke-width="1" stroke-linejoin="round" stroke-linecap="round"/>
</g>
<polygon points="379,68 384,68 384,81.3 391,75 391,82 381.5,91.6 372,82 372,75 379,81.3" fill="#ffff00" stroke="#a08a00" stroke-width="0.6"/>
<polygon points="372.70,87.20 374.38,92.29 379.74,92.31 375.41,95.48 377.05,100.59 372.70,97.45 368.35,100.59 369.99,95.48 365.66,92.31 371.02,92.29" fill="#ffff00" stroke="#a08a00" stroke-width="0.5"/>
<text x="27.9" y="47.6" font-size="9.3" fill="#fff" stroke="#fff" stroke-width="0.18" textLength="50.6" lengthAdjust="spacingAndGlyphs" xml:space="preserve">USDJPY,H1</text>
<text x="84.9" y="47.6" font-size="9.3" fill="#fff" stroke="#fff" stroke-width="0.18" textLength="141.6" lengthAdjust="spacingAndGlyphs" xml:space="preserve">147.742 147.773 147.741 147.763</text>
<text x="17.2" y="389.2" font-size="9.3" fill="#fff" stroke="#fff" stroke-width="0.18" textLength="267.0" lengthAdjust="spacingAndGlyphs" xml:space="preserve">RCI10lines 96.7 19.6 -2.7 -31.0 -49.9 -62.3 -66.9 -24.2 73.6 39.0</text>
<text x="686.7" y="45.1" font-size="9.3" fill="#fff" stroke="#fff" stroke-width="0.18" textLength="33.8" lengthAdjust="spacingAndGlyphs" xml:space="preserve">146.615</text>
<text x="686.7" y="78.1" font-size="9.3" fill="#fff" stroke="#fff" stroke-width="0.18" textLength="33.8" lengthAdjust="spacingAndGlyphs" xml:space="preserve">146.445</text>
<text x="686.7" y="111.1" font-size="9.3" fill="#fff" stroke="#fff" stroke-width="0.18" textLength="33.8" lengthAdjust="spacingAndGlyphs" xml:space="preserve">146.270</text>
<text x="686.7" y="144.1" font-size="9.3" fill="#fff" stroke="#fff" stroke-width="0.18" textLength="33.8" lengthAdjust="spacingAndGlyphs" xml:space="preserve">146.100</text>
<text x="686.7" y="177.1" font-size="9.3" fill="#fff" stroke="#fff" stroke-width="0.18" textLength="33.8" lengthAdjust="spacingAndGlyphs" xml:space="preserve">145.925</text>
<text x="686.7" y="210.1" font-size="9.3" fill="#fff" stroke="#fff" stroke-width="0.18" textLength="33.8" lengthAdjust="spacingAndGlyphs" xml:space="preserve">145.755</text>
<text x="686.7" y="243.1" font-size="9.3" fill="#fff" stroke="#fff" stroke-width="0.18" textLength="33.8" lengthAdjust="spacingAndGlyphs" xml:space="preserve">145.580</text>
<text x="686.7" y="276.1" font-size="9.3" fill="#fff" stroke="#fff" stroke-width="0.18" textLength="33.8" lengthAdjust="spacingAndGlyphs" xml:space="preserve">145.410</text>
<text x="686.7" y="309.1" font-size="9.3" fill="#fff" stroke="#fff" stroke-width="0.18" textLength="33.8" lengthAdjust="spacingAndGlyphs" xml:space="preserve">145.240</text>
<text x="686.7" y="342.1" font-size="9.3" fill="#fff" stroke="#fff" stroke-width="0.18" textLength="33.8" lengthAdjust="spacingAndGlyphs" xml:space="preserve">145.065</text>
<text x="686.7" y="375.1" font-size="9.3" fill="#fff" stroke="#fff" stroke-width="0.18" textLength="33.8" lengthAdjust="spacingAndGlyphs" xml:space="preserve">144.895</text>
<text x="684.6" y="386.7" font-size="9.3" fill="#fff" stroke="#fff" stroke-width="0.18" textLength="14.6" lengthAdjust="spacingAndGlyphs" xml:space="preserve">120</text>
<text x="684.6" y="396.7" font-size="9.3" fill="#fff" stroke="#fff" stroke-width="0.18" textLength="14.6" lengthAdjust="spacingAndGlyphs" xml:space="preserve">100</text>
<text x="684.6" y="412.7" font-size="9.3" fill="#fff" stroke="#fff" stroke-width="0.18" textLength="9.7" lengthAdjust="spacingAndGlyphs" xml:space="preserve">80</text>
<text x="684.6" y="476.7" font-size="9.3" fill="#fff" stroke="#fff" stroke-width="0.18" textLength="17.0" lengthAdjust="spacingAndGlyphs" xml:space="preserve">0.00</text>
<text x="684.6" y="540.3000000000001" font-size="9.3" fill="#fff" stroke="#fff" stroke-width="0.18" textLength="12.6" lengthAdjust="spacingAndGlyphs" xml:space="preserve">-80</text>
<text x="684.6" y="549.5" font-size="9.3" fill="#fff" stroke="#fff" stroke-width="0.18" textLength="17.5" lengthAdjust="spacingAndGlyphs" xml:space="preserve">-100</text>
<text x="12.4" y="566.2" font-size="9.3" fill="#fff" stroke="#fff" stroke-width="0.18" textLength="52.2" lengthAdjust="spacingAndGlyphs" xml:space="preserve">15 Aug 2023</text>
<text x="76.4" y="566.2" font-size="9.3" fill="#fff" stroke="#fff" stroke-width="0.18" textLength="54.8" lengthAdjust="spacingAndGlyphs" xml:space="preserve">16 Aug 07:00</text>
<text x="140.4" y="566.2" font-size="9.3" fill="#fff" stroke="#fff" stroke-width="0.18" textLength="54.8" lengthAdjust="spacingAndGlyphs" xml:space="preserve">16 Aug 15:00</text>
<text x="204.4" y="566.2" font-size="9.3" fill="#fff" stroke="#fff" stroke-width="0.18" textLength="54.8" lengthAdjust="spacingAndGlyphs" xml:space="preserve">16 Aug 23:00</text>
<text x="268.4" y="566.2" font-size="9.3" fill="#fff" stroke="#fff" stroke-width="0.18" textLength="54.8" lengthAdjust="spacingAndGlyphs" xml:space="preserve">17 Aug 07:00</text>
<text x="332.4" y="566.2" font-size="9.3" fill="#fff" stroke="#fff" stroke-width="0.18" textLength="54.8" lengthAdjust="spacingAndGlyphs" xml:space="preserve">17 Aug 15:00</text>
<text x="396.4" y="566.2" font-size="9.3" fill="#fff" stroke="#fff" stroke-width="0.18" textLength="54.8" lengthAdjust="spacingAndGlyphs" xml:space="preserve">17 Aug 23:00</text>
<text x="460.4" y="566.2" font-size="9.3" fill="#fff" stroke="#fff" stroke-width="0.18" textLength="54.8" lengthAdjust="spacingAndGlyphs" xml:space="preserve">18 Aug 07:00</text>
<text x="524.4" y="566.2" font-size="9.3" fill="#fff" stroke="#fff" stroke-width="0.18" textLength="54.8" lengthAdjust="spacingAndGlyphs" xml:space="preserve">18 Aug 15:00</text>
<text x="588.4" y="566.2" font-size="9.3" fill="#fff" stroke="#fff" stroke-width="0.18" textLength="54.8" lengthAdjust="spacingAndGlyphs" xml:space="preserve">18 Aug 23:00</text>
<text x="652.4" y="566.2" font-size="9.3" fill="#fff" stroke="#fff" stroke-width="0.18" textLength="54.8" lengthAdjust="spacingAndGlyphs" xml:space="preserve">21 Aug 07:00</text>
</svg>
</body></html>
